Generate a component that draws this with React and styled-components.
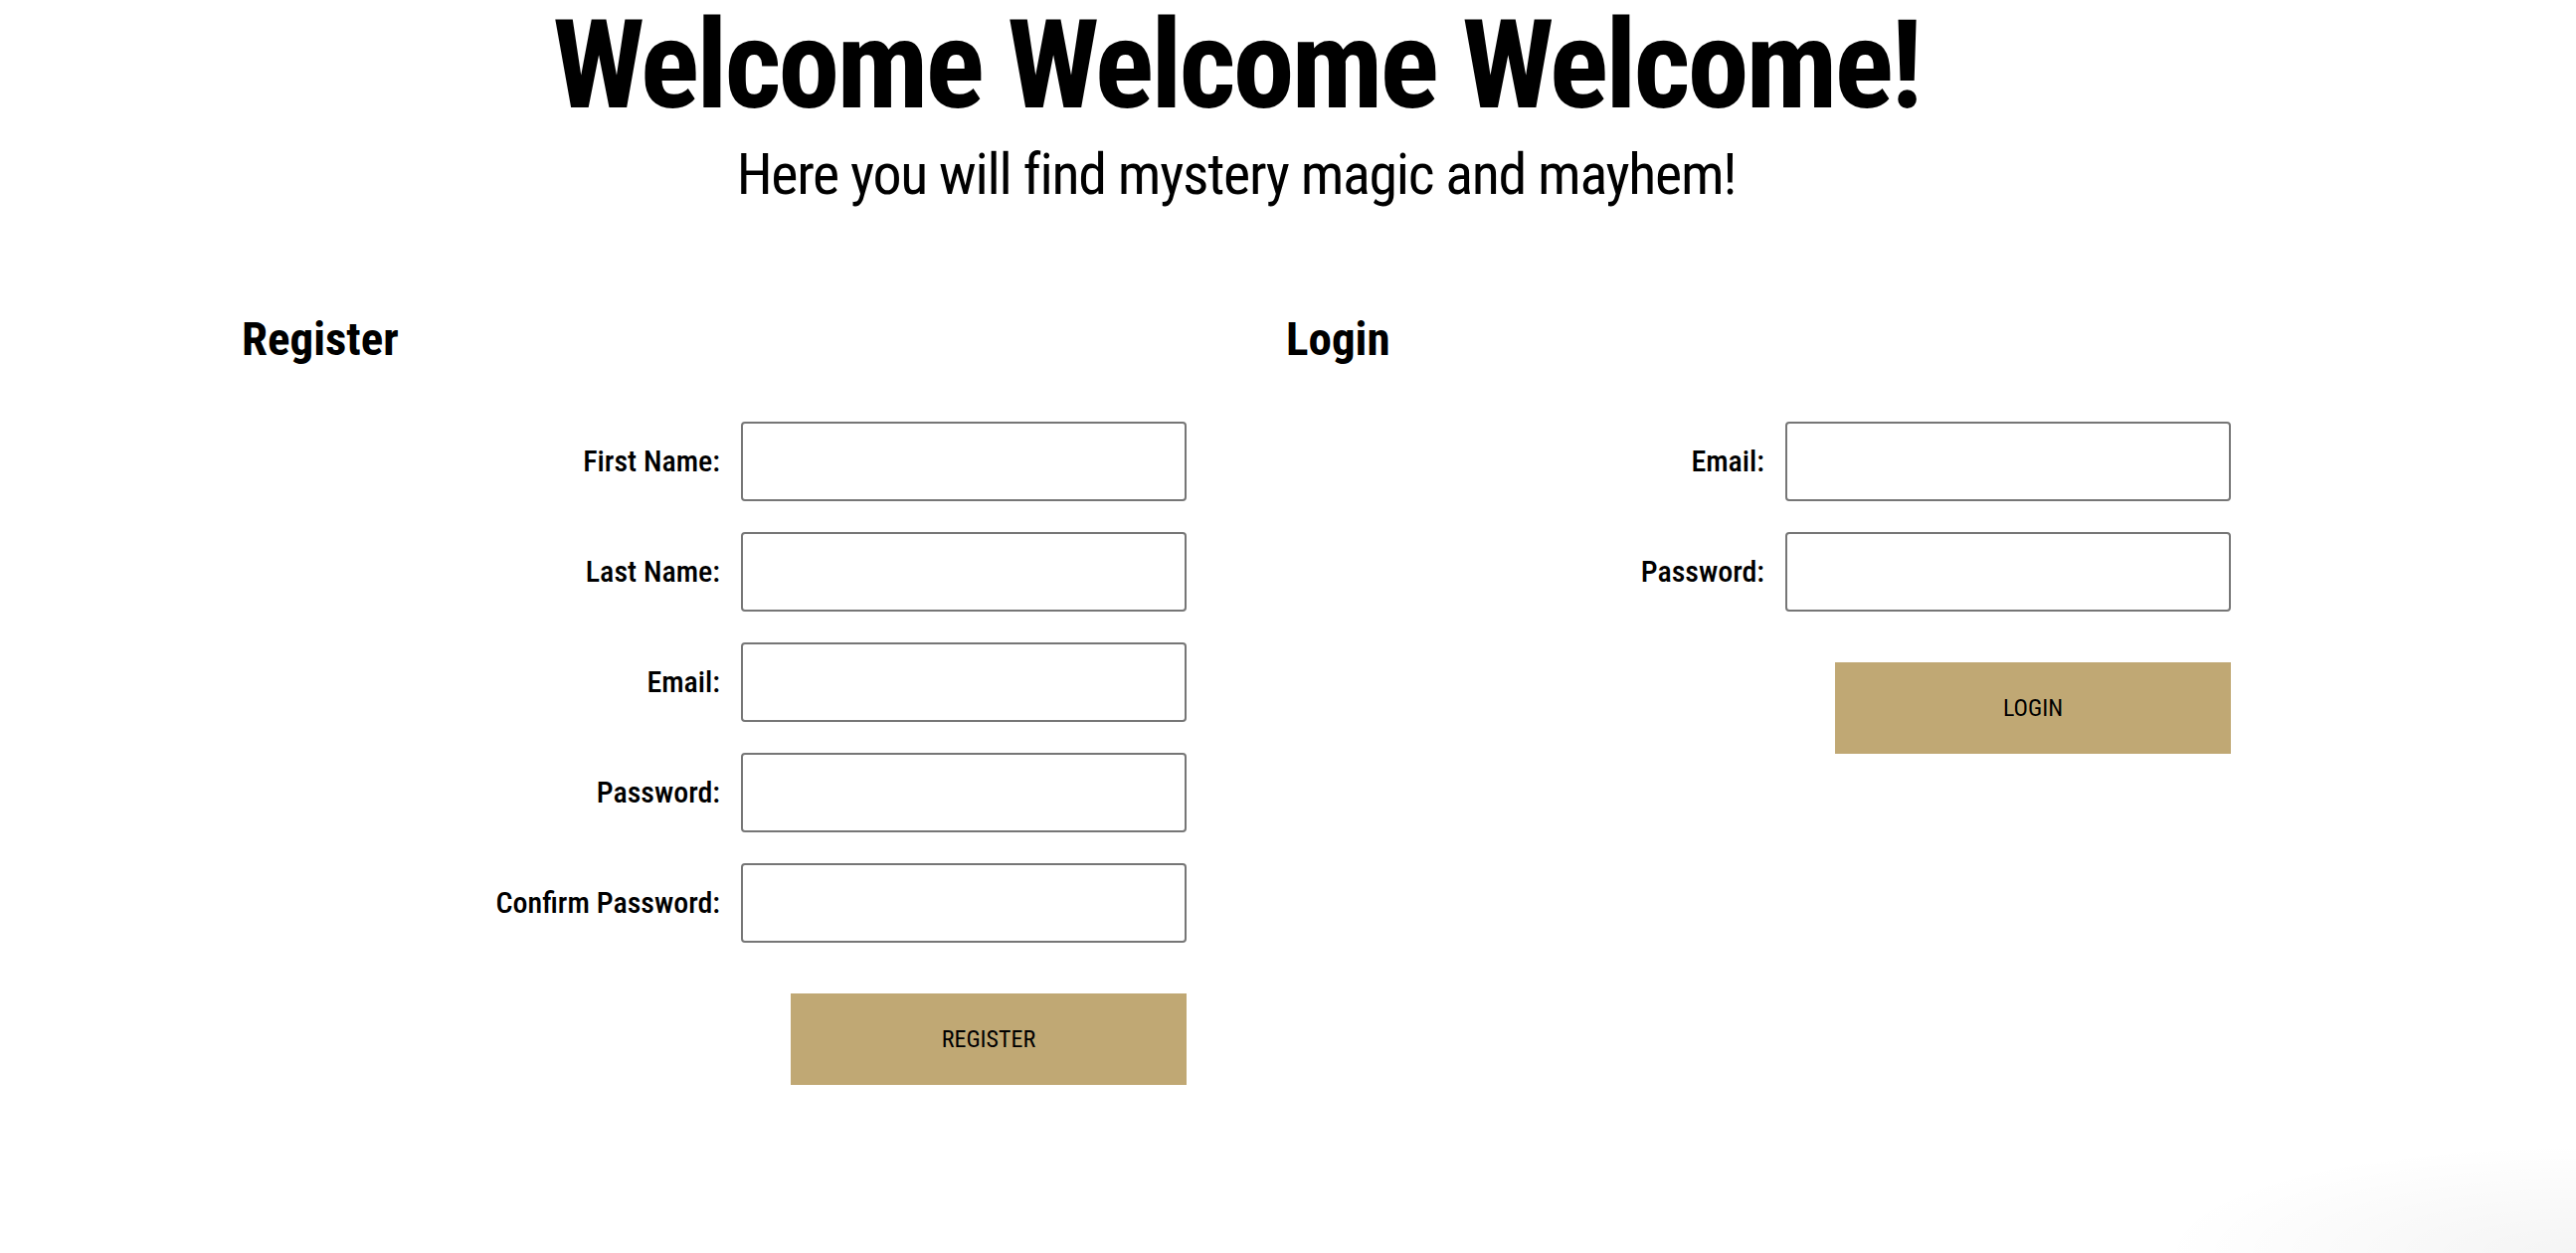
import React from "react";
import styled, { createGlobalStyle } from "styled-components";

const Global = createGlobalStyle`
  html, body {
    margin: 0;
    padding: 0;
    background: #ffffff;
    min-height: 100%;
  }
  body {
    min-height: 1260px;
    background:
      radial-gradient(ellipse 420px 110px at 100% 100%, rgba(0,0,0,0.045), rgba(0,0,0,0) 100%),
      #ffffff;
    font-family: "Roboto Condensed", "Roboto", "Liberation Sans", sans-serif;
    color: #000;
  }
  * { box-sizing: border-box; }
`;

const Page = styled.div`
  width: 2486px;
  display: flex;
  flex-direction: column;
  align-items: center;
`;

const Title = styled.h1`
  margin: 4px 0 0;
  font-size: 124px;
  line-height: 124px;
  font-weight: 700;
  letter-spacing: -2.9px;
  white-space: nowrap;
`;

const Subtitle = styled.h2`
  margin: 18px 0 0;
  font-size: 58px;
  line-height: 58px;
  font-weight: 400;
  letter-spacing: -1.3px;
  white-space: nowrap;
`;

const Columns = styled.div`
  margin-top: 114px;
  display: grid;
  grid-template-columns: 950px 950px;
  column-gap: 100px;
`;

const Column = styled.section`
  display: flex;
  flex-direction: column;
`;

const Heading = styled.h3`
  margin: 0;
  font-size: 47px;
  line-height: 46px;
  font-weight: 700;
`;

const Form = styled.form`
  margin-top: 60px;
  display: flex;
  flex-direction: column;
  align-items: flex-end;
  gap: 31px;
`;

const Row = styled.div`
  display: flex;
  align-items: center;
  gap: 21px;
`;

const Label = styled.label`
  font-size: 30px;
  line-height: 30px;
  font-weight: 500;
  white-space: nowrap;
`;

const Input = styled.input`
  width: 448px;
  height: 80px;
  border: 2px solid #767676;
  border-radius: 4px;
  background: #fff;
  padding: 0 8px;
  font: inherit;
  font-size: 28px;
`;

const Button = styled.button`
  margin-top: 20px;
  width: 398px;
  height: 92px;
  border: none;
  background: #c0a874;
  color: #000;
  font-family: inherit;
  font-size: 24px;
  font-weight: 400;
  text-transform: uppercase;
  cursor: pointer;
`;

const registerFields = [
  { id: "first", label: "First Name:", type: "text" },
  { id: "last", label: "Last Name:", type: "text" },
  { id: "regEmail", label: "Email:", type: "email" },
  { id: "regPass", label: "Password:", type: "password" },
  { id: "confirm", label: "Confirm Password:", type: "password" },
];

const loginFields = [
  { id: "loginEmail", label: "Email:", type: "email" },
  { id: "loginPass", label: "Password:", type: "password" },
];

function FormBlock({ title, fields, action }) {
  return (
    <Column>
      <Heading>{title}</Heading>
      <Form onSubmit={(e) => e.preventDefault()}>
        {fields.map((f) => (
          <Row key={f.id}>
            <Label htmlFor={f.id}>{f.label}</Label>
            <Input id={f.id} type={f.type} />
          </Row>
        ))}
        <Button type="submit">{action}</Button>
      </Form>
    </Column>
  );
}

export default function App() {
  return (
    <>
      <Global />
      <Page>
        <Title>Welcome Welcome Welcome!</Title>
        <Subtitle>Here you will find mystery magic and mayhem!</Subtitle>
        <Columns>
          <FormBlock title="Register" fields={registerFields} action="Register" />
          <FormBlock title="Login" fields={loginFields} action="Login" />
        </Columns>
      </Page>
    </>
  );
}
